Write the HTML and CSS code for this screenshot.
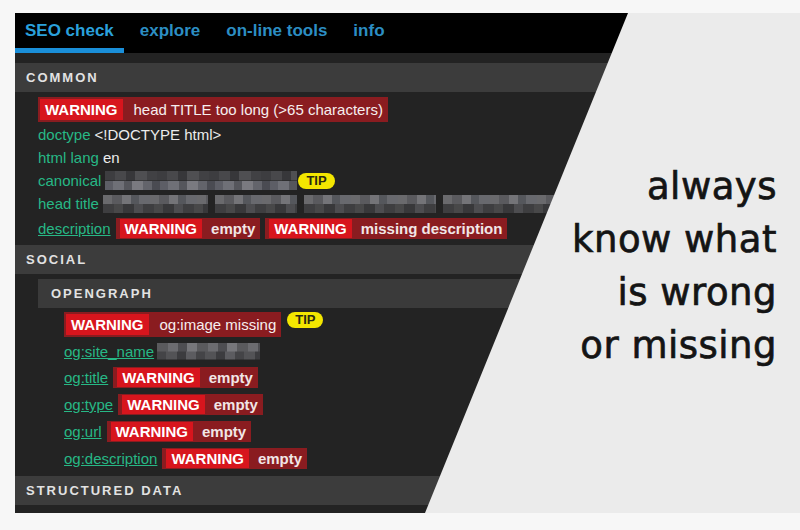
FILE: index.html
```html
<!DOCTYPE html>
<html lang="en">
<head>
<meta charset="utf-8">
<title>SEO check</title>
<link rel="stylesheet" href="styles.css">
</head>
<body>
<div class="frame">
  <div class="app">
    <nav class="tabs">
      <a class="tab active">SEO check</a>
      <a class="tab">explore</a>
      <a class="tab">on-line tools</a>
      <a class="tab">info</a>
    </nav>

    <section class="group common">
      <h2 class="bar">COMMON</h2>
      <div class="rows">
        <div class="row tall">
          <span class="badge big"><span class="lvl">WARNING</span><span class="msg">head TITLE too long (&gt;65 characters)</span></span>
        </div>
        <div class="row"><span class="lbl">doctype</span><span class="val">&lt;!DOCTYPE html&gt;</span></div>
        <div class="row"><span class="lbl">html lang</span><span class="val">en</span></div>
        <div class="row">
          <span class="lbl">canonical</span>
          <span class="blur canon"></span>
          <span class="tip">TIP</span>
        </div>
        <div class="row">
          <span class="lbl">head title</span>
          <span class="blurs">
            <span class="blur ht w1"></span>
            <span class="blur ht w2"></span>
            <span class="blur ht w3"></span>
            <span class="blur ht w4"></span>
          </span>
        </div>
        <div class="row tall">
          <a class="lbl link">description</a>
          <span class="badge"><span class="lvl">WARNING</span><span class="msg">empty</span></span>
          <span class="badge"><span class="lvl">WARNING</span><span class="msg">missing description</span></span>
        </div>
      </div>
    </section>

    <section class="group social">
      <h2 class="bar">SOCIAL</h2>
      <section class="sub">
        <h3 class="bar">OPENGRAPH</h3>
        <div class="rows og">
          <div class="row tall top">
            <span class="badge big"><span class="lvl">WARNING</span><span class="msg">og:image missing</span></span>
            <span class="tip">TIP</span>
          </div>
          <div class="row mid">
            <a class="lbl link">og:site_name</a>
            <span class="blur site"></span>
          </div>
          <div class="row tall">
            <a class="lbl link">og:title</a>
            <span class="badge"><span class="lvl">WARNING</span><span class="msg">empty</span></span>
          </div>
          <div class="row tall">
            <a class="lbl link">og:type</a>
            <span class="badge"><span class="lvl">WARNING</span><span class="msg">empty</span></span>
          </div>
          <div class="row tall">
            <a class="lbl link">og:url</a>
            <span class="badge"><span class="lvl">WARNING</span><span class="msg">empty</span></span>
          </div>
          <div class="row tall">
            <a class="lbl link">og:description</a>
            <span class="badge"><span class="lvl">WARNING</span><span class="msg">empty</span></span>
          </div>
        </div>
      </section>
    </section>

    <section class="group">
      <h2 class="bar">STRUCTURED DATA</h2>
    </section>
  </div>

  <div class="promo">
    <p class="tagline">always<br>know what<br>is wrong<br>or missing</p>
  </div>
</div>
</body>
</html>
```

FILE: styles.css
```css
* { box-sizing: border-box; }

html, body {
  margin: 0;
  padding: 0;
  background: #f7f7f7;
}

.frame {
  position: relative;
  margin: 13px 0 0 15px;
  width: 785px;
  height: 500px;
  overflow: hidden;
  background: #232323;
  font-family: "Liberation Sans", Arial, sans-serif;
  font-size: 15px;
  color: #ececec;
}

.app {
  width: 785px;
}

/* nav */
.tabs {
  display: flex;
  gap: 6px;
  height: 40px;
  background: #000;
}

.tab {
  padding: 8px 10px 7px;
  line-height: 20px;
  font-size: 17px;
  font-weight: bold;
  color: #2c8ec3;
  border-bottom: 5px solid transparent;
  white-space: nowrap;
}

.tab.active {
  color: #2aa0db;
  border-bottom-color: #1a8fd9;
}

/* groups and bars */
.group {
  margin: 0;
}

.common {
  padding-top: 10px;
}

.bar {
  margin: 0;
  height: 29px;
  line-height: 29px;
  padding-left: 11px;
  background: #3c3c3c;
  font-size: 13px;
  font-weight: bold;
  letter-spacing: 2px;
  color: #e2e2e2;
}

.sub {
  margin: 5px 0 0 23px;
}

.sub .bar {
  padding-left: 13px;
  background: #3a3a3a;
}

.rows {
  display: flex;
  flex-direction: column;
  padding: 4px 0 3px 23px;
}

.rows.og {
  padding: 3px 0 4px 26px;
}

.row {
  display: flex;
  align-items: center;
  height: 23px;
  white-space: nowrap;
}

.row.tall { height: 27px; }
.row.mid { height: 26px; }
.row.top { align-items: flex-start; padding-top: 1px; }

.lbl {
  color: #27b886;
  margin-right: 4px;
}

.lbl.link {
  text-decoration: underline;
  margin-right: 0;
}

.val {
  color: #ececec;
}

/* badges */
.badge {
  display: inline-flex;
  align-items: center;
  margin-left: 5px;
  padding: 1px 5px 1px 4px;
  background: #8a1c20;
  line-height: 19px;
}

.badge.big {
  margin-left: 0;
  padding: 2px 5px 2px 2px;
  line-height: 21px;
}

.lvl {
  padding: 0 5px;
  background: #d7151d;
  color: #fff;
  font-weight: bold;
}

.msg {
  margin-left: 9px;
  color: #f1e6e6;
  font-weight: bold;
}

.badge.big .msg {
  margin-left: 11px;
  font-weight: normal;
  color: #f6eeee;
}

.tip {
  display: inline-block;
  margin-left: 1px;
  height: 16px;
  line-height: 16px;
  padding: 0 8px;
  border-radius: 8px;
  background: #f3e600;
  color: #2a2a10;
  font-size: 13px;
  font-weight: bold;
}

.row.top .tip {
  margin-left: 6px;
}

/* pixelated blurs */
.blur {
  display: inline-block;
  background-repeat: no-repeat;
  background-size: 100% 50%, 100% 50%;
  background-position: 0 0, 0 100%;
}

.blur.canon {
  width: 192px;
  height: 19px;
  background-image:
    repeating-linear-gradient(90deg, #3d3d40 0 10px, #48484b 10px 21px, #37373a 21px 30px, #4f4f52 30px 42px, #414144 42px 52px),
    repeating-linear-gradient(90deg, #5d5e66 0 8px, #6f7077 8px 19px, #55565c 19px 27px, #7a7a80 27px 38px, #63646b 38px 47px, #4a4b52 47px 55px);
}

.blurs {
  display: flex;
  gap: 7px;
}

.blur.ht {
  height: 18px;
  background-image:
    repeating-linear-gradient(90deg, #6a6a6d 0 9px, #5a5a5e 9px 19px, #747478 19px 28px, #55575c 28px 36px, #68696e 36px 47px),
    repeating-linear-gradient(90deg, #3e3e40 0 11px, #484849 11px 20px, #38383a 20px 31px, #4d4d50 31px 40px);
}

.blur.w1 { width: 105px; }
.blur.w2 { width: 82px; }
.blur.w3 { width: 132px; }
.blur.w4 { width: 140px; }

.blur.site {
  margin-left: 3px;
  width: 103px;
  height: 17px;
  background-image:
    repeating-linear-gradient(90deg, #5a5a5d 0 11px, #6c6c70 11px 21px, #4e4e52 21px 30px, #77777b 30px 40px),
    repeating-linear-gradient(90deg, #444447 0 9px, #535356 9px 20px, #3c3c3f 20px 29px, #5c5c60 29px 39px);
}

/* light diagonal overlay with the tagline */
.promo {
  position: absolute;
  top: 0;
  left: 0;
  right: 0;
  bottom: 0;
  background: #ebebeb;
  clip-path: polygon(613px 0, 100% 0, 100% 100%, 410px 100%);
}

.tagline {
  margin: 0;
  padding: 147px 23px 0 0;
  text-align: right;
  font-family: "DejaVu Sans", sans-serif;
  font-size: 37px;
  line-height: 53px;
  letter-spacing: 0.5px;
  color: #141414;
  -webkit-text-stroke: 0.7px #141414;
}
```
